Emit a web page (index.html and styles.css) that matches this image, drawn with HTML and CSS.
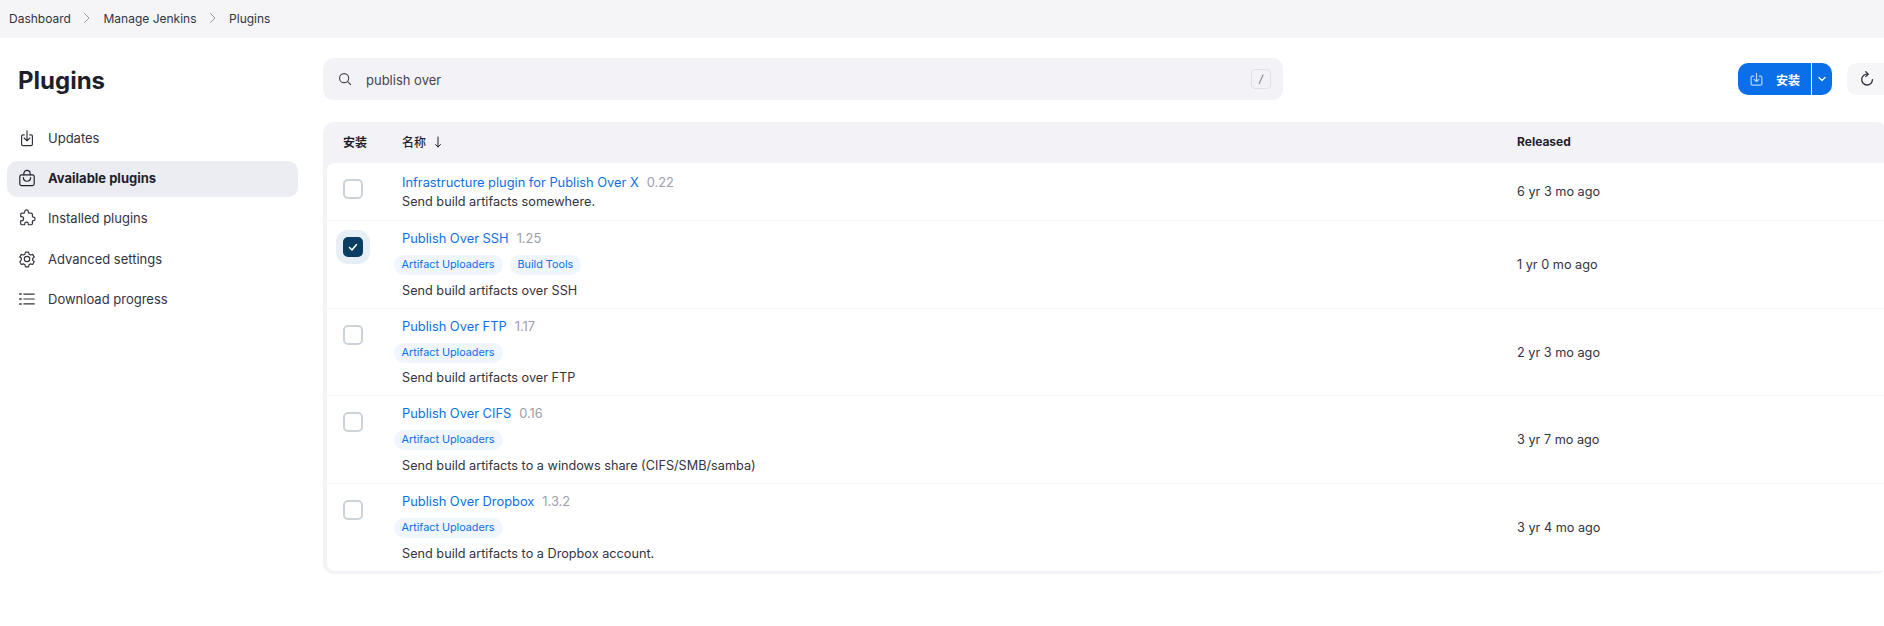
FILE: index.html
```html
<!DOCTYPE html>
<html>
<head>
    <title>Plugins</title>
    <meta name="viewport" content="width=device-width, initial-scale=1">
    <link rel="stylesheet" href="styles.css">
</head>
<body>
    <nav class="breadcrumbs">
        <a>Dashboard</a>
        <svg class="crumb-sep" viewBox="0 0 12 12"><path d="M3.500 1.500 8 6l-4.500 4.500"/></svg>
        <a>Manage Jenkins</a>
        <svg class="crumb-sep" viewBox="0 0 12 12"><path d="M3.500 1.500 8 6l-4.500 4.500"/></svg>
        <a>Plugins</a>
    </nav>
    <div class="page">
        <aside class="sidebar">
            <h1>Plugins</h1>
            <ul class="side-nav">
                <li>
                    <svg class="side-icon" viewBox="0 0 20 20"><path d="M7 6.500H5.500A1.500 1.500 0 0 0 4 8v9a1.500 1.500 0 0 0 1.500 1.500h9A1.500 1.500 0 0 0 16 17V8a1.500 1.500 0 0 0-1.500-1.500H13"/><path d="M10 2v11M6.800 10 10 13.200 13.200 10"/></svg>
                    Updates
                </li>
                <li class="active">
                    <svg class="side-icon" viewBox="0 0 20 20"><rect x="2" y="6.500" width="16" height="12" rx="2"/><path d="M6.500 6.500V5a3.500 3.500 0 0 1 7 0v1.500M6 9.500c0 5.500 8 5.500 8 0"/></svg>
                    Available plugins
                </li>
                <li>
                    <svg class="side-icon" viewBox="0 0 20 20"><path d="M8 3.500a2 2 0 0 1 4 0c0 1 .100 1.500 1 1.500h2a1.500 1.500 0 0 1 1.500 1.500v2c0 .8.500 1 1 1a2 2 0 0 1 0 4c-.5 0-1 .2-1 1v1.500A1.500 1.500 0 0 1 15 18h-2.500c-.8 0-.5-.7-.5-1a2 2 0 0 0-4 0c0 .3.300 1-.5 1H5a1.500 1.500 0 0 1-1.500-1.500V14c0-.8.700-.6 1-.6a2.200 2.200 0 0 0 0-4.400c-.3 0-1 .2-1-.6V6.500A1.500 1.500 0 0 1 5 5h2c.8 0 1-.5 1-1.500Z" transform="translate(-.5 -.5)"/></svg>
                    Installed plugins
                </li>
                <li>
                    <svg class="side-icon" viewBox="0 0 20 20"><circle cx="10" cy="10" r="3"/><path d="M8.300 2.300h3.400l.6 2.300 1.700 1 2.300-.7 1.700 3-1.700 1.600v2l1.700 1.600-1.700 3-2.300-.7-1.700 1-.6 2.300H8.300l-.6-2.300-1.700-1-2.300.7-1.700-3L3.700 11V9L2 7.900l1.700-3 2.300.7 1.700-1Z"/></svg>
                    Advanced settings
                </li>
                <li>
                    <svg class="side-icon" viewBox="0 0 20 20"><path d="M6.500 4.500H18M6.500 10H18M6.500 15.500H18"/><path class="dots" d="M2 4.500h1.500M2 10h1.500M2 15.500h1.500"/></svg>
                    Download progress
                </li>
            </ul>
        </aside>
        <main class="content">
            <div class="toolbar">
                <div class="search">
                    <svg class="search-icon" viewBox="0 0 16 16"><circle cx="7" cy="7" r="5.200"/><path d="m11 11 3.500 3.500"/></svg>
                    <span class="search-text">publish over</span>
                    <kbd>/</kbd>
                </div>
                <div class="actions">
                    <button class="install">
                        <svg viewBox="0 0 16 16"><path d="M5 4.500H3.500A1.200 1.200 0 0 0 2.300 5.700v7.100A1.200 1.200 0 0 0 3.500 14h9a1.200 1.200 0 0 0 1.200-1.200V5.700a1.200 1.200 0 0 0-1.200-1.200H11"/><path d="M8 1.500v8.500M5.500 7.800 8 10.300l2.500-2.500"/></svg>
                        安装
                    </button>
                    <button class="caret">
                        <svg viewBox="0 0 10 10"><path d="m2 3.500 3 3 3-3"/></svg>
                    </button>
                    <button class="refresh">
                        <svg viewBox="0 0 16 16"><path d="M8.500 3.200A5.400 5.400 0 1 0 13.500 8.600"/><path d="M6.800 .8 9.200 3.200 6.800 5.600"/></svg>
                    </button>
                </div>
            </div>
            <div class="plugin-table">
                <div class="table-head">
                    <span class="col-check">安装</span>
                    <span class="col-name">名称<svg class="arrow" viewBox="0 0 10 12"><path d="M5 1v10M2.500 8.500 5 11l2.500-2.500"/></svg></span>
                    <span class="col-released">Released</span>
                </div>
                <div class="row row-short">
                    <div class="col-check"><span class="checkbox"></span></div>
                    <div class="col-name">
                        <div class="title"><a>Infrastructure plugin for Publish Over X</a><span class="version">0.22</span></div>
                        <div class="desc">Send build artifacts somewhere.</div>
                    </div>
                    <div class="col-released">6 yr 3 mo ago</div>
                </div>
                <div class="row">
                    <div class="col-check"><span class="checkbox checked"><svg viewBox="0 0 12 12"><path d="m2.500 6.500 2.500 2.500 4.500-5.500"/></svg></span></div>
                    <div class="col-name">
                        <div class="title"><a>Publish Over SSH</a><span class="version">1.25</span></div>
                        <div class="tags"><span class="tag">Artifact Uploaders</span><span class="tag">Build Tools</span></div>
                        <div class="desc">Send build artifacts over SSH</div>
                    </div>
                    <div class="col-released">1 yr 0 mo ago</div>
                </div>
                <div class="row">
                    <div class="col-check"><span class="checkbox"></span></div>
                    <div class="col-name">
                        <div class="title"><a>Publish Over FTP</a><span class="version">1.17</span></div>
                        <div class="tags"><span class="tag">Artifact Uploaders</span></div>
                        <div class="desc">Send build artifacts over FTP</div>
                    </div>
                    <div class="col-released">2 yr 3 mo ago</div>
                </div>
                <div class="row">
                    <div class="col-check"><span class="checkbox"></span></div>
                    <div class="col-name">
                        <div class="title"><a>Publish Over CIFS</a><span class="version">0.16</span></div>
                        <div class="tags"><span class="tag">Artifact Uploaders</span></div>
                        <div class="desc">Send build artifacts to a windows share (CIFS/SMB/samba)</div>
                    </div>
                    <div class="col-released">3 yr 7 mo ago</div>
                </div>
                <div class="row">
                    <div class="col-check"><span class="checkbox"></span></div>
                    <div class="col-name">
                        <div class="title"><a>Publish Over Dropbox</a><span class="version">1.3.2</span></div>
                        <div class="tags"><span class="tag">Artifact Uploaders</span></div>
                        <div class="desc">Send build artifacts to a Dropbox account.</div>
                    </div>
                    <div class="col-released">3 yr 4 mo ago</div>
                </div>
            </div>
        </main>
    </div>
</body>
</html>
```

FILE: styles.css
```css
body {
    background-color: white;
    color: #1f1f2b;
    font-family: Inter, "Noto Sans CJK SC", sans-serif;
    font-size: 12.700px;
    margin: 0;
    overflow: hidden;
}

svg {
    fill: none;
    stroke: currentColor;
    stroke-width: 1.300;
    stroke-linecap: round;
    stroke-linejoin: round;
}

.breadcrumbs {
    display: flex;
    align-items: center;
    height: 38px;
    box-sizing: border-box;
    padding: 0 0 2px 9px;
    background-color: #f5f5f8;
    color: #33333f;
    font-size: 12px;
}

.crumb-sep {
    width: 12px;
    height: 12px;
    margin: 0 10.300px;
    color: #9a9aa6;
    stroke-width: 1;
}

.page {
    display: grid;
    grid-template-columns: 323px 1564px;
}

.sidebar {
    padding: 24px 25px 0 7px;
}

h1 {
    font-size: 24px;
    font-weight: 700;
    line-height: 38px;
    margin: 0 0 21px 11px;
}

.side-nav {
    list-style: none;
    margin: 0;
    padding: 0;
}

.side-nav li {
    display: flex;
    align-items: center;
    gap: 12px;
    height: 36px;
    box-sizing: border-box;
    margin-bottom: 4.200px;
    padding: 0 0 2px 11px;
    border-radius: 10px;
    color: #33333f;
    font-size: 13px;
}

.side-nav li.active {
    background-color: #ecedf3;
    color: #1f1f2b;
    font-weight: 700;
}

.side-icon {
    width: 18px;
    height: 18px;
    flex-shrink: 0;
}

.dots {
    stroke-width: 1.800;
}

.content {
    padding-top: 20px;
}

.toolbar {
    display: flex;
    justify-content: space-between;
    align-items: center;
    height: 42px;
    margin-bottom: 22px;
}

.search {
    display: flex;
    align-items: center;
    width: 960px;
    height: 42px;
    box-sizing: border-box;
    padding: 0 12px 0 15px;
    background-color: #f3f3f7;
    border-radius: 10px;
    color: #44444f;
    font-size: 13px;
}

.search-icon {
    width: 14px;
    height: 14px;
}

.search-text {
    flex: 1;
    margin-left: 14px;
    padding-top: 1px;
}

kbd {
    width: 18px;
    height: 18px;
    border: 1px solid #dfdfe8;
    border-radius: 4px;
    color: #6a6a78;
    font-family: inherit;
    font-size: 11px;
    font-style: italic;
    line-height: 18px;
    text-align: center;
}

.actions {
    display: flex;
    align-items: center;
}

button {
    display: flex;
    align-items: center;
    justify-content: center;
    height: 32px;
    border: none;
    padding: 0;
    font-family: inherit;
}

.install {
    gap: 12px;
    width: 73px;
    background-color: #0a6fe8;
    border-radius: 10px 0 0 10px;
    color: white;
    font-size: 12px;
    font-weight: 700;
}

.install svg {
    width: 15px;
    height: 15px;
    color: #b4d4f8;
}

.caret {
    width: 20px;
    margin-left: 1px;
    background-color: #0a6fe8;
    border-radius: 0 10px 10px 0;
    color: white;
}

.caret svg {
    width: 10px;
    height: 10px;
}

.refresh {
    width: 40px;
    margin-left: 15px;
    background-color: #f6f6f9;
    border-radius: 10px 0 0 10px;
    color: #33333f;
}

.refresh svg {
    width: 16px;
    height: 16px;
}

.plugin-table {
    background-color: #f3f3f7;
    border-radius: 10px;
    padding-bottom: 3px;
}

.table-head {
    display: flex;
    align-items: center;
    height: 41px;
    box-sizing: border-box;
    padding-bottom: 2px;
    font-size: 12px;
    font-weight: 700;
}

.table-head .col-check {
    width: 79px;
    box-sizing: border-box;
    justify-content: flex-start;
    padding-left: 20px;
}

.table-head .col-name {
    display: flex;
    align-items: center;
    font-weight: 500;
}

.arrow {
    width: 10px;
    height: 12px;
    margin-left: 7px;
    stroke-width: 1;
}

.row {
    display: flex;
    align-items: center;
    height: 86.700px;
    margin: 0 0 1px 4px;
    background-color: white;
}

.row:last-child {
    margin-bottom: 0;
    border-bottom-left-radius: 8px;
}

.row-short {
    height: 57px;
    border-top-left-radius: 8px;
}

.col-check {
    display: flex;
    justify-content: center;
}

.row .col-check {
    width: 52px;
    margin-right: 23px;
    align-self: flex-start;
    padding-top: 16px;
}

.col-name {
    flex: 1;
    min-width: 0;
}

.col-released {
    width: 370px;
}

.row .col-released {
    color: #33333f;
}

.checkbox {
    display: flex;
    align-items: center;
    justify-content: center;
    width: 20px;
    height: 20px;
    box-sizing: border-box;
    border: 2px solid #ccd2d9;
    border-radius: 5px;
}

.checkbox.checked {
    background-color: #0a3d62;
    border-color: #0a3d62;
    box-shadow: 0 0 0 7px #e6eff6;
    color: white;
}

.checkbox svg {
    width: 12px;
    height: 12px;
    stroke-width: 1.500;
}

.title {
    display: flex;
    align-items: baseline;
    gap: 8px;
    margin-top: 1px;
    font-size: 12.850px;
    line-height: 18px;
}

.title a {
    color: #0a6fe8;
}

.version {
    color: #9d9daa;
}

.tags {
    display: flex;
    gap: 7px;
    margin: 7px 0 5.500px -8.500px;
}

.tag {
    height: 20px;
    padding: 0 8px;
    background-color: #f0f6fd;
    border-radius: 10px;
    color: #0a6fe8;
    font-size: 10.800px;
    line-height: 20px;
}

.desc {
    color: #33333f;
    line-height: 19px;
}
```
